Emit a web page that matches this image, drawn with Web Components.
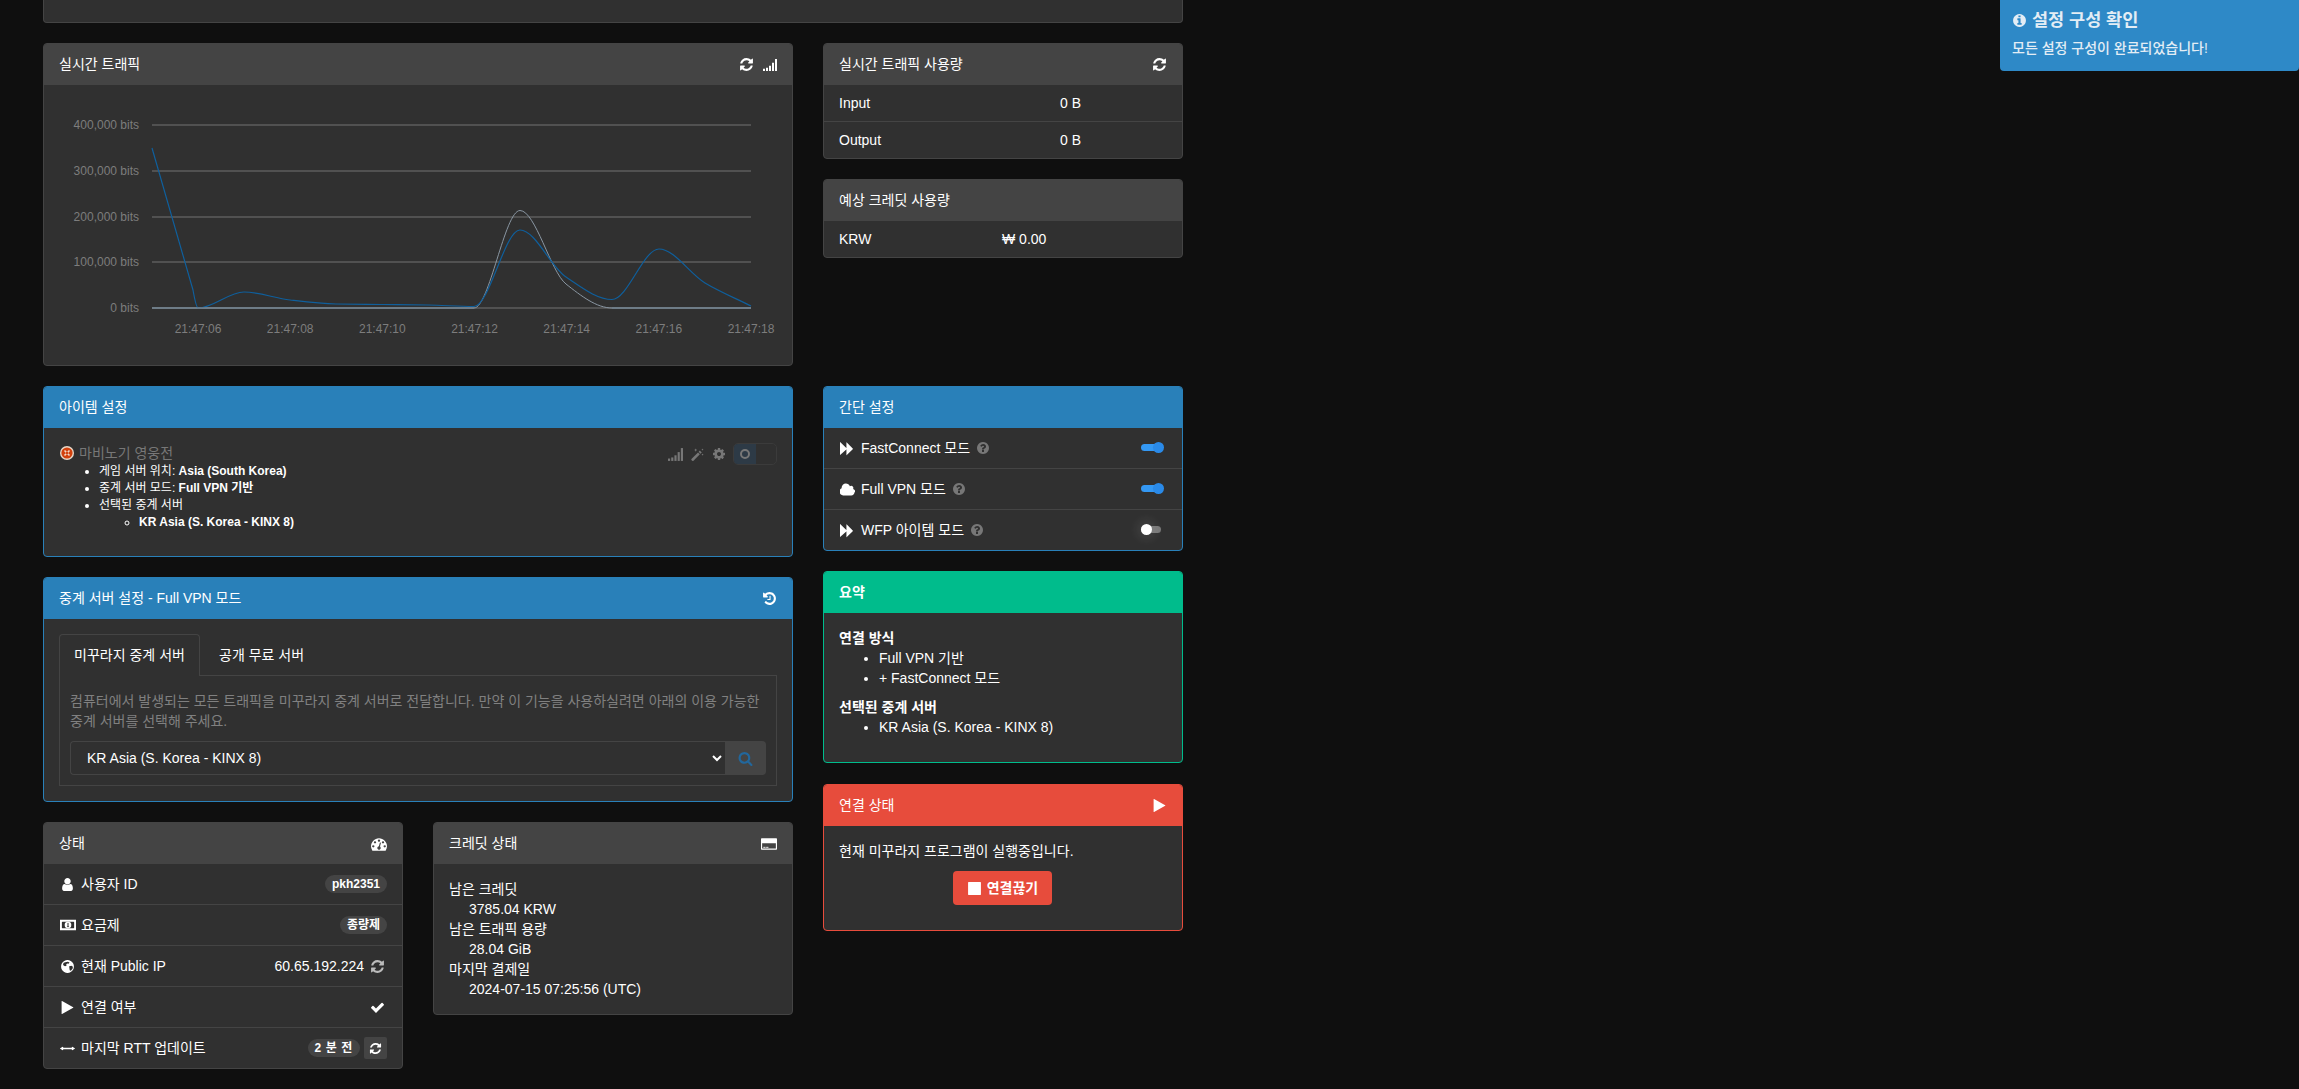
<!DOCTYPE html>
<html lang="ko"><head><meta charset="utf-8"><title>Mudfish</title>
<style>
html,body{margin:0;height:1089px;overflow:hidden;background:#0f0f0f;color:#fff;font:14px/20px "Liberation Sans","Noto Sans CJK KR",sans-serif}
</style></head>
<body>
<app-shell>
  <ui-card slot="top" stub></ui-card>

  <div slot="a1"><ui-card heading="실시간 트래픽">
    <fa-icon slot="actions" name="refresh" size="15"></fa-icon>
    <fa-icon slot="actions" name="signal" size="14"></fa-icon>
    <traffic-chart></traffic-chart>
  </ui-card></div>

  <ui-stack slot="b1">
    <ui-card heading="실시간 트래픽 사용량">
      <fa-icon slot="actions" name="refresh" size="15"></fa-icon>
      <kv-row col="221" k="Input" v="0 B"></kv-row>
      <kv-row col="221" k="Output" v="0 B" sep></kv-row>
    </ui-card>
    <ui-card heading="예상 크레딧 사용량">
      <kv-row col="163" k="KRW" v="₩ 0.00"></kv-row>
    </ui-card>
  </ui-stack>

  <ui-stack slot="a2">
    <ui-card heading="아이템 설정" tone="blue">
      <game-item></game-item>
    </ui-card>
    <ui-card heading="중계 서버 설정 - Full VPN 모드" tone="blue">
      <fa-icon slot="actions" name="history" size="15"></fa-icon>
      <relay-tabs></relay-tabs>
    </ui-card>
    <ui-pair>
      <ui-card heading="상태">
        <fa-icon slot="actions" name="tachometer" size="16"></fa-icon>
        <list-row label="사용자 ID" icon="user"><ui-badge>pkh2351</ui-badge></list-row>
        <list-row label="요금제" icon="money" sep><ui-badge>종량제</ui-badge></list-row>
        <list-row label="현재 Public IP" icon="globe" sep><span>60.65.192.224</span><fa-icon name="refresh" size="15" style="color:#bbb;margin:0 2px 0 6px"></fa-icon></list-row>
        <list-row label="연결 여부" icon="play" sep><fa-icon name="check" size="15" style="margin-right:2px"></fa-icon></list-row>
        <list-row label="마지막 RTT 업데이트" icon="arrows" sep><ui-badge spaced>2 분 전</ui-badge><icon-button></icon-button></list-row>
      </ui-card>
      <ui-card heading="크레딧 상태">
        <fa-icon slot="actions" name="card" size="16"></fa-icon>
        <credit-list></credit-list>
      </ui-card>
    </ui-pair>
  </ui-stack>

  <ui-stack slot="b2">
    <ui-card heading="간단 설정" tone="blue">
      <list-row label="FastConnect 모드" icon="forward" help><ui-switch on></ui-switch></list-row>
      <list-row label="Full VPN 모드" icon="cloud" help sep><ui-switch on></ui-switch></list-row>
      <list-row label="WFP 아이템 모드" icon="forward" help sep><ui-switch></ui-switch></list-row>
    </ui-card>
    <ui-card heading="요약" tone="green" strong>
      <summary-box></summary-box>
    </ui-card>
    <ui-card heading="연결 상태" tone="red" style="margin-top:1px">
      <fa-icon slot="actions" name="play" size="15"></fa-icon>
      <connect-box></connect-box>
    </ui-card>
  </ui-stack>
</app-shell>
<toast-note heading="설정 구성 확인" text="모든 설정 구성이 완료되었습니다!"></toast-note>

<script>
const ICONS={
refresh:'<path d="M1639 1056q0 5-1 7-64 268-268 434.5t-478 166.5q-146 0-282.5-55t-243.5-157l-129 129q-19 19-45 19t-45-19-19-45v-448q0-26 19-45t45-19h448q26 0 45 19t19 45-19 45l-137 137q71 66 161 102t187 36q134 0 250-65t186-179q11-17 53-117 8-23 30-23h192q13 0 22.5 9.5t9.5 22.5zm25-800v448q0 26-19 45t-45 19h-448q-26 0-45-19t-19-45 19-45l138-138q-148-137-349-137-134 0-250 65t-186 179q-11 17-53 117-8 23-30 23h-199q-13 0-22.5-9.5t-9.5-22.5v-7q65-268 270-434.5t480-166.5q146 0 284 55.5t245 156.5l130-129q19-19 45-19t45 19 19 45z"/>',
signal:'<rect x="0" y="1376" width="256" height="288"/><rect x="384" y="1248" width="256" height="416"/><rect x="768" y="992" width="256" height="672"/><rect x="1152" y="608" width="256" height="1056"/><rect x="1536" y="128" width="256" height="1536"/>',
play:'<path d="M1576 927l-1328 738q-23 13-39.5 3t-16.5-36v-1472q0-26 16.5-36t39.5 3l1328 738q23 13 23 31t-23 31z"/>',
stop:'<path d="M1664 192v1408q0 26-19 45t-45 19h-1408q-26 0-45-19t-19-45v-1408q0-26 19-45t45-19h1408q26 0 45 19t19 45z"/>',
check:'<path d="M1671 566q0 40-28 68l-724 724-136 136q-28 28-68 28t-68-28l-136-136-362-362q-28-28-28-68t28-68l136-136q28-28 68-28t68 28l294 295 656-657q28-28 68-28t68 28l136 136q28 28 28 68z"/>',
user:'<path d="M1536 1399q0 109-62.5 187t-150.5 78h-854q-88 0-150.5-78t-62.5-187q0-85 8.5-160.5t31.5-152 58.5-131 94-89 134.5-34.5q131 128 313 128t313-128q76 0 134.5 34.5t94 89 58.5 131 31.5 152 8.5 160.5zm-256-887q0 159-112.5 271.5t-271.5 112.5-271.5-112.5-112.5-271.5 112.5-271.5 271.5-112.5 271.5 112.5 112.5 271.5z"/>',
cloud:'<path d="M1728 1216q0 159-112.5 271.5t-271.5 112.5h-960q-185 0-316.5-131.5t-131.5-316.5q0-132 71-241.5t187-163.5q-2-28-2-43 0-212 150-362t362-150q158 0 286.5 88t187.5 230q70-62 166-62 106 0 181 75t75 181q0 75-41 138 129 30 213 134.5t84 239.5z"/>',
forward:'<path d="M45 1651q-19 19-32 13t-13-32v-1472q0-26 13-32t32 13l710 710q8 8 13 19v-678q0-26 13-32t32 13l710 710q19 19 19 45t-19 45l-710 710q-19 19-32 13t-13-32v-678q-5 10-13 19z"/>',
question:'<path d="M1024 1376v-192q0-14-9-23t-23-9h-192q-14 0-23 9t-9 23v192q0 14 9 23t23 9h192q14 0 23-9t9-23zm256-672q0-88-55.5-163t-138.5-116-170-41q-243 0-371 213-15 24 8 42l132 100q7 6 19 6 16 0 25-12 53-68 86-92 34-24 86-24 48 0 85.5 26t37.5 59q0 38-20 61t-68 45q-63 28-115.5 86.5t-52.5 125.5v36q0 14 9 23t23 9h192q14 0 23-9t9-23q0-19 21.5-49.5t54.5-49.5q32-18 49-28.5t46-35 44.5-48 28-60.5 12.5-81zm384 192q0 209-103 385.5t-279.5 279.5-385.5 103-385.5-103-279.5-279.5-103-385.5 103-385.5 279.5-279.5 385.5-103 385.5 103 279.5 279.5 103 385.5z"/>',
info:'<path d="M1152 1376v-160q0-14-9-23t-23-9h-96v-512q0-14-9-23t-23-9h-320q-14 0-23 9t-9 23v160q0 14 9 23t23 9h96v320h-96q-14 0-23 9t-9 23v160q0 14 9 23t23 9h448q14 0 23-9t9-23zm-128-896v-160q0-14-9-23t-23-9h-192q-14 0-23 9t-9 23v160q0 14 9 23t23 9h192q14 0 23-9t9-23zm640 416q0 209-103 385.5t-279.5 279.5-385.5 103-385.5-103-279.5-279.5-103-385.5 103-385.5 279.5-279.5 385.5-103 385.5 103 279.5 279.5 103 385.5z"/>',
search:'<path d="M1216 832q0-185-131.5-316.5t-316.5-131.5-316.5 131.5-131.5 316.5 131.5 316.5 316.5 131.5 316.5-131.5 131.5-316.5zm512 832q0 52-38 90t-90 38q-54 0-90-38l-343-342q-179 124-399 124-143 0-273.5-55.5t-225-150-150-225-55.5-273.5 55.5-273.5 150-225 225-150 273.5-55.5 273.5 55.5 225 150 150 225 55.5 273.5q0 220-124 399l343 343q37 37 37 90z"/>',
cog:'<path d="M1152 896q0-106-75-181t-181-75-181 75-75 181 75 181 181 75 181-75 75-181zm512-109v222q0 12-8 23t-20 13l-185 28q-19 54-39 91 35 50 107 138 10 12 10 25t-9 23q-27 37-99 108t-94 71q-12 0-26-9l-138-108q-44 23-91 38-16 136-29 186-7 28-36 28h-222q-14 0-24.5-8.5t-11.5-21.5l-28-184q-49-16-90-37l-141 107q-10 9-25 9-14 0-25-11-126-114-165-168-7-10-7-23 0-12 8-23 15-21 51-66.5t54-70.5q-27-50-41-99l-183-27q-13-2-21-12.5t-8-23.5v-222q0-12 8-23t19-13l186-28q14-46 39-92-40-57-107-138-10-12-10-24 0-10 9-23 26-36 98.5-107.5t94.5-71.5q13 0 26 10l138 107q44-23 91-38 16-136 29-186 7-28 36-28h222q14 0 24.5 8.5t11.5 21.5l28 184q49 16 90 37l142-107q9-9 24-9 13 0 25 10 129 119 165 170 7 8 7 22 0 12-8 23-15 21-51 66.5t-54 70.5q26 50 41 98l183 28q13 2 21 12.5t8 23.5z"/>',
history:'<path d="M1664 896q0 156-61 298t-164 245-245 164-298 61q-172 0-327-72.5t-264-204.5q-7-10-6.5-22.5t8.5-20.5l137-138q10-9 25-9 16 2 23 12 73 95 179 147t225 52q104 0 198.5-40.5t163.5-109.5 109.5-163.5 40.5-198.5-40.5-198.5-109.5-163.5-163.5-109.5-198.5-40.5q-98 0-188 35.5t-160 101.5l137 138q31 30 14 69-17 40-59 40h-448q-26 0-45-19t-19-45v-448q0-42 40-59 39-17 69 14l130 129q107-101 244.5-156.5t284.5-55.5q156 0 298 61t245 164 164 245 61 298zm-640-288v448q0 14-9 23t-23 9h-320q-14 0-23-9t-9-23v-64q0-14 9-23t23-9h224v-352q0-14 9-23t23-9h64q14 0 23 9t9 23z"/>',
tachometer:'<path d="M384 1152q0-53-37.5-90.5t-90.5-37.5-90.5 37.5-37.5 90.5 37.5 90.5 90.5 37.5 90.5-37.5 37.5-90.5zm192-448q0-53-37.5-90.5t-90.5-37.5-90.5 37.5-37.5 90.5 37.5 90.5 90.5 37.5 90.5-37.5 37.5-90.5zm428 481l101-382q6-26-7.5-48.5t-38.5-29.5-48 6.5-30 39.5l-101 382q-60 5-107 43.5t-63 98.5q-20 77 20 146t117 89 146-20 89-117q16-60-6-117t-72-91zm660-33q0-53-37.5-90.5t-90.5-37.5-90.5 37.5-37.5 90.5 37.5 90.5 90.5 37.5 90.5-37.5 37.5-90.5zm-640-640q0-53-37.5-90.5t-90.5-37.5-90.5 37.5-37.5 90.5 37.5 90.5 90.5 37.5 90.5-37.5 37.5-90.5zm448 192q0-53-37.5-90.5t-90.5-37.5-90.5 37.5-37.5 90.5 37.5 90.5 90.5 37.5 90.5-37.5 37.5-90.5zm320 448q0 261-141 483-19 29-54 29h-1402q-35 0-54-29-141-221-141-483 0-182 71-348t191-286 286-191 348-71 348 71 286 191 191 286 71 348z"/>',
arrows:'<path d="M1792 896q0 26-19 45l-256 256q-19 19-45 19t-45-19-19-45v-128h-1024v128q0 26-19 45t-45 19-45-19l-256-256q-19-19-19-45t19-45l256-256q19-19 45-19t45 19 19 45v128h1024v-128q0-26 19-45t45-19 45 19l256 256q19 19 19 45z" transform="translate(0 896) scale(1 .62) translate(0 -896)"/>',
money:'<path fill-rule="evenodd" d="M0 320h1792v1152H0zM260 540q-50 0-50 50v612q0 50 50 50h1272q50 0 50-50V590q0-50-50-50z"/><ellipse cx="896" cy="896" rx="370" ry="370"/><rect x="840" y="660" width="112" height="400" fill="#303030"/><rect x="780" y="1040" width="232" height="90" fill="#303030"/>',
globe:'<path fill-rule="evenodd" d="M896 128a768 768 0 1 0 .1 0zM620 380l320-60 200 90-120 160-180-20-110 150 60 110-190 50-170-90-70-140 90-170zM1100 880l260-70 180 110-40 240-210 230-130-60-40-250z"/>',
card:'<path fill-rule="evenodd" d="M80 256h1632q80 0 80 80v1120q0 80-80 80H80q-80 0-80-80V336q0-80 80-80zM128 800v608h1536V800z"/><rect x="256" y="1216" width="256" height="96"/><rect x="576" y="1216" width="256" height="96"/>',
wand:'<path d="M1180 430L1400 650 1250 800 1030 580z"/><path d="M960 650L1180 870 390 1660Q340 1700 290 1660L170 1540Q130 1490 170 1440z"/><path d="M680 180l60 130 130 60-130 60-60 130-60-130-130-60 130-60zM1490 180l40 90 90 40-90 40-40 90-40-90-90-40 90-40zM1500 780l40 90 90 40-90 40-40 90-40-90-90-40 90-40z"/>'
};
function def(name,css,html,init){
  customElements.define(name,class extends HTMLElement{
    constructor(){super();const s=this.attachShadow({mode:'open'});s.innerHTML='<style>'+css+'</style>'+(typeof html==='function'?html(this):html);}
    connectedCallback(){
      const s=this.shadowRoot;
      if(typeof html==='function'&&!this._r){s.innerHTML='<style>'+css+'</style>'+html(this);}
      this._r=1; if(init)init(this,s);
    }
  });
}
def('fa-icon',':host{display:inline-flex;flex:none;color:inherit}svg{display:block;fill:currentColor}',
  h=>{const z=h.getAttribute('size')||14;return `<svg width="${z}" height="${z}" viewBox="0 0 1792 1792" aria-hidden="true">${ICONS[h.getAttribute('name')]||''}</svg>`});

def('app-shell',`:host{display:flex;flex-direction:column;gap:20px;width:1140px;margin-left:43px}
.row{display:grid;grid-template-columns:750px 360px;column-gap:30px;align-items:start}`,
`<slot name="top"></slot>
<div class="row"><slot name="a1"></slot><slot name="b1"></slot></div>
<div class="row"><slot name="a2"></slot><slot name="b2"></slot></div>`);

def('ui-stack',':host{display:flex;flex-direction:column;gap:20px;min-width:0}','<slot></slot>');
def('ui-pair',':host{display:grid;grid-template-columns:360px 360px;column-gap:30px;align-items:start}','<slot></slot>');

def('ui-card',`:host{display:block;box-sizing:border-box;background:#303030;border:1px solid var(--edge,#444);border-radius:4px;--head:#444;--edge:#444;overflow:hidden}
:host([tone=blue]){--head:#2980b9;--edge:#2980b9}
:host([tone=green]){--head:#00bc8c;--edge:#00bc8c}
:host([tone=red]){--head:#e74c3c;--edge:#e74c3c}
:host([stub]){height:23px;border-top:0;border-radius:0 0 4px 4px;background:#303030}
:host([stub]) header{display:none}
header{display:flex;align-items:center;justify-content:space-between;height:41px;padding:0 15px;background:var(--head);color:#fff;margin-top:0}
h3{margin:-2px 0 0;font-size:14px;line-height:20px;font-weight:400}
:host([strong]) h3{font-weight:700}
.act{display:flex;align-items:center;gap:9px}`,
h=>`<header><h3>${h.getAttribute('heading')||''}</h3><div class="act"><slot name="actions"></slot></div></header><slot></slot>`);

def('kv-row',`:host{display:grid;height:36px;align-items:center;padding:0 15px;box-sizing:content-box}
:host([sep]){border-top:1px solid #444}`,
h=>`<span>${h.getAttribute('k')}</span><span>${h.getAttribute('v')}</span>`,
h=>{h.style.gridTemplateColumns=h.getAttribute('col')+'px 1fr'});

def('list-row',`:host{display:flex;align-items:center;height:40px;padding:0 15px}
:host([sep]){border-top:1px solid #444}
.ic{width:15px;margin-right:6px;display:flex;justify-content:center;margin-left:1px}
.lb{margin-right:6px}
.q{color:#777}
.r{margin-left:auto;display:flex;align-items:center}`,
h=>`<span class="ic"><fa-icon name="${h.getAttribute('icon')}" size="${h.getAttribute('icon')==='money'?16:15}"></fa-icon></span><span class="lb">${h.getAttribute('label')}</span>${h.hasAttribute('help')?'<fa-icon class="q" name="question" size="14"></fa-icon>':''}<span class="r"><slot></slot></span>`);

def('ui-badge',`:host{display:inline-block;background:#444;color:#fff;border-radius:10px;padding:0 7px;font-size:12px;font-weight:700;line-height:18px;white-space:nowrap}
:host([spaced]){letter-spacing:.6px}`,'<slot></slot>');

def('icon-button',`:host{display:flex;align-items:center;justify-content:center;width:23px;height:22px;margin-left:4px;background:#444;border-radius:2px}`,
'<fa-icon name="refresh" size="13"></fa-icon>');

def('ui-switch',`:host{display:block;position:relative;width:22px;height:12px;margin-right:4px}
.t{position:absolute;left:0;top:2px;width:20px;height:7px;border-radius:4px;background:#777}
.k{position:absolute;left:0;top:0;width:11px;height:11px;border-radius:50%;background:#fff;box-shadow:0 0 10px 5px rgba(255,255,255,.07)}
:host([on]) .t{background:#3498f3;width:17px}
:host([on]) .k{left:12px;background:#2a8ae8;box-shadow:none}`,
'<div class="t"></div><div class="k"></div>');

def('game-item',`:host{display:block;padding:15px 15px 25px;position:relative;height:88px}
.t{display:flex;align-items:center;color:#777;height:20px}
svg.g{margin:0 5px 0 1px}
ul{margin:0;padding-left:40px;font-size:12px;line-height:17px}
ul ul{list-style:circle}
b{font-weight:700}
.tools{position:absolute;right:15px;top:15px;display:flex;align-items:center;color:#777;gap:7px}
.tg{width:44px;height:22px;border-radius:5px;box-sizing:border-box;border:1px solid #3b3b3b;display:flex;overflow:hidden}
.tg i{width:22px;background:#2d3a46;display:flex;align-items:center;justify-content:center}
.tg s{display:block;width:6px;height:6px;border:2px solid #777;border-radius:50%}`,
`<div class="t"><svg class="g" width="14" height="14" viewBox="0 0 14 14"><circle cx="7" cy="7" r="7" fill="#e9d7c7"/><circle cx="7" cy="7" r="5.6" fill="#d2410d"/><path d="M4.5 4.5l5 5M9.5 4.5l-5 5" stroke="#f3d9c6" stroke-width="1.6"/><circle cx="7" cy="7" r="1.2" fill="#d2410d"/></svg>마비노기 영웅전</div>
<ul><li>게임 서버 위치: <b>Asia (South Korea)</b></li><li>중계 서버 모드: <b>Full VPN 기반</b></li><li>선택된 중계 서버<ul><li><b>KR Asia (S. Korea - KINX 8)</b></li></ul></li></ul>
<div class="tools"><fa-icon name="signal" size="15"></fa-icon><fa-icon name="wand" size="15"></fa-icon><fa-icon name="cog" size="14"></fa-icon><div class="tg"><i><s></s></i></div></div>`);

def('relay-tabs',`:host{display:block;padding:15px}
.tabs{display:flex;height:41px}
.tab{display:flex;align-items:center;border:1px solid transparent;border-bottom:0;margin-right:2px;box-sizing:border-box;border-radius:4px 4px 0 0;white-space:nowrap;justify-content:center;padding-bottom:1px}
.tab.on{width:141px;border-color:#444;background:#303030;position:relative;z-index:1;margin-bottom:-1px;height:42px}
.tab.off{padding:0 16px 1px}
.pane{border:1px solid #444;padding:15px 10px 10px;color:#808080}
p{margin:0 0 10px}
.ig{display:flex;height:34px}
select{flex:1;min-width:0;height:34px;box-sizing:border-box;background:#303030;color:#fff;border:1px solid #444;border-right:0;border-radius:4px 0 0 4px;padding:0 12px;font:14px/20px "Liberation Sans","Noto Sans CJK KR",sans-serif;outline:0}
.btn{width:41px;background:#444;border-radius:0 4px 4px 0;display:flex;align-items:center;justify-content:center;color:#22679c}`,
`<div class="tabs"><div class="tab on">미꾸라지 중계 서버</div><div class="tab off">공개 무료 서버</div></div>
<div class="pane"><p>컴퓨터에서 발생되는 모든 트래픽을 미꾸라지 중계 서버로 전달합니다. 만약 이 기능을 사용하실려면 아래의 이용 가능한 중계 서버를 선택해 주세요.</p>
<div class="ig"><select aria-label="중계 서버"><option>KR Asia (S. Korea - KINX 8)</option></select><div class="btn"><fa-icon name="search" size="15"></fa-icon></div></div></div>`);

def('credit-list',`:host{display:block;padding:15px}dl{margin:0}dd{margin:0 0 0 20px}dt{font-weight:400}`,
`<dl><dt>남은 크레딧</dt><dd>3785.04 KRW</dd><dt>남은 트래픽 용량</dt><dd>28.04 GiB</dd><dt>마지막 결제일</dt><dd>2024-07-15 07:25:56 (UTC)</dd></dl>`);

def('summary-box',`:host{display:block;padding:15px}
b{display:block}ul{margin:0 0 9px;padding-left:40px}ul:last-child{margin-bottom:10px}`,
`<b>연결 방식</b><ul><li>Full VPN 기반</li><li>+ FastConnect 모드</li></ul><b>선택된 중계 서버</b><ul><li>KR Asia (S. Korea - KINX 8)</li></ul>`);

def('connect-box',`:host{display:block;padding:15px 15px 25px}
p{margin:0 0 10px}
.c{display:flex;justify-content:center;padding-right:1px}
button{display:flex;align-items:center;gap:5px;height:34px;width:99px;justify-content:center;background:#e74c3c;color:#fff;border:0;border-radius:4px;font:700 14px/20px "Liberation Sans","Noto Sans CJK KR",sans-serif;padding:0}`,
`<p>현재 미꾸라지 프로그램이 실행중입니다.</p><div class="c"><button><fa-icon name="stop" size="15"></fa-icon>연결끊기</button></div>`);

def('toast-note',`:host{position:fixed;left:2000px;right:0;top:0;height:71px;background:#2e89c7;border-radius:0 0 4px 4px;color:#e3edf5;padding:0 12px;box-sizing:border-box;display:block}
h4{margin:0;padding-top:10px;display:flex;align-items:center;gap:5px;font-size:17.5px;font-weight:700;line-height:20px}
p{margin:8px 0 0;font-size:14px;line-height:20px;font-weight:500}`,
h=>`<h4><fa-icon name="info" size="15"></fa-icon>${h.getAttribute('heading')}</h4><p>${h.getAttribute('text')}</p>`);

def('traffic-chart',`:host{display:block;height:280px}svg{display:block}text{font:12px "Liberation Sans",sans-serif;fill:#7d7d7d}`,
`<svg width="748" height="280" viewBox="44 85 748 280"></svg>`,
(h,s)=>{
 const xs=[152,198,244,290,336,382,428,474,520,566,612,659,705,751];
 const blue=[148,308,292,300,304,304.5,305,306.5,230,277,299.5,249,283,306];
 const white=[308,308,308,308,308,308,308,308,210.5,284,308,308,308,308];
 function mono(X,Y,straightStart){const n=X.length,d=[],m=[];for(let i=0;i<n-1;i++)d[i]=(Y[i+1]-Y[i])/(X[i+1]-X[i]);
  m[0]=d[0];m[n-1]=d[n-2];for(let i=1;i<n-1;i++)m[i]=d[i-1]*d[i]<=0?0:2*d[i-1]*d[i]/(d[i-1]+d[i]);
  let p=`M${X[0]} ${Y[0]}`;for(let i=0;i<n-1;i++){
    if(i===0&&straightStart){p+=`L${X[0]+41} ${Y[0]+142}Q${X[1]-2} ${Y[1]-1} ${X[1]} ${Y[1]}`;continue}
    const t=(X[i+1]-X[i])/3;p+=`C${X[i]+t} ${Y[i]+m[i]*t} ${X[i+1]-t} ${Y[i+1]-m[i+1]*t} ${X[i+1]} ${Y[i+1]}`}return p}
 let o='';
 [[125,'400,000 bits'],[171,'300,000 bits'],[217,'200,000 bits'],[262,'100,000 bits'],[308,'0 bits']].forEach(([y,t],i)=>{
  o+=`<line x1="152" x2="751" y1="${y}" y2="${y}" stroke="#5c5c5c" stroke-width="${i==0?1.6:1.3}"/><text x="139" y="${y+4}" text-anchor="end">${t}</text>`});
 ['21:47:06','21:47:08','21:47:10','21:47:12','21:47:14','21:47:16','21:47:18'].forEach((t,i)=>{
  o+=`<text x="${198+i*92.17}" y="333" text-anchor="middle">${t}</text>`});
 o+=`<path d="${mono(xs,white)}" fill="none" stroke="#8a97a3" stroke-width="1"/><path d="${mono(xs,blue,true)}" fill="none" stroke="#0f5f9c" stroke-width="1.2"/><line x1="152" x2="474" y1="308" y2="308" stroke="#6f7f8c" stroke-width="1.5"/><line x1="612" x2="751" y1="308" y2="308" stroke="#6f7f8c" stroke-width="1.5"/>`;
 s.querySelector('svg').innerHTML=o;
});
</script>
</body></html>
